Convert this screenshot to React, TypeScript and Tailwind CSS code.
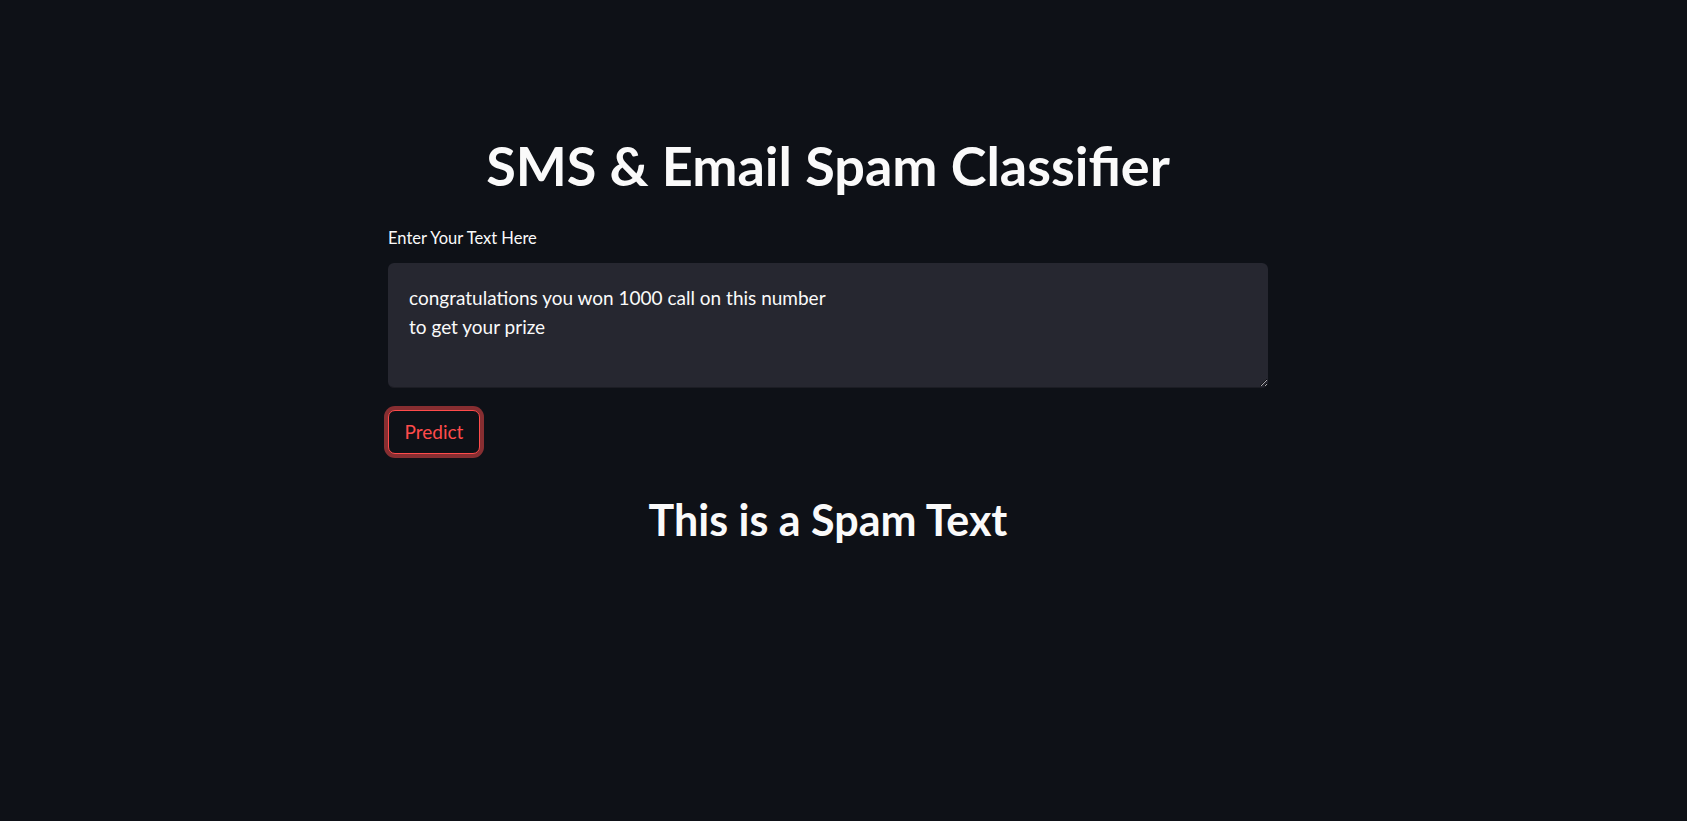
import React from 'react';

const font = { fontFamily: 'Lato, "Noto Sans", sans-serif' };

export default function App() {
  return (
    <div className="min-h-[821px] w-full bg-[#0e1117] text-[#fafafa]" style={font}>
      <div className="ml-[388px] w-[880px] pt-[139px]">
        {/* title */}
        <h1 className="text-center text-[54px] font-bold leading-[54px]">SMS &amp; Email Spam Classifier</h1>

        {/* label + text area */}
        <label className="mt-[35px] block text-[16.5px] leading-[20px]">Enter Your Text Here</label>
        <textarea
          className="mt-[15px] block h-[125px] w-full rounded-[6px] border-b border-[#1c1d24] bg-[#262730] px-[21px] pt-[20px] text-[19px] leading-[29px] text-[#fafafa] outline-none"
          defaultValue={'congratulations you won 1000 call on this number\nto get your prize'}
        />

        {/* button */}
        <button className="mt-[22px] flex h-[44px] w-[92px] items-center justify-center rounded-[7px] border border-[#ff4b4b] bg-[#0e1117] text-[19px] text-[#ff4b4b] shadow-[0_0_0_4px_rgba(255,75,75,0.5)]">
          Predict
        </button>

        {/* result */}
        <h2 className="mt-[44px] text-center text-[43px] font-bold leading-[43px]">This is a Spam Text</h2>
      </div>
    </div>
  );
}
